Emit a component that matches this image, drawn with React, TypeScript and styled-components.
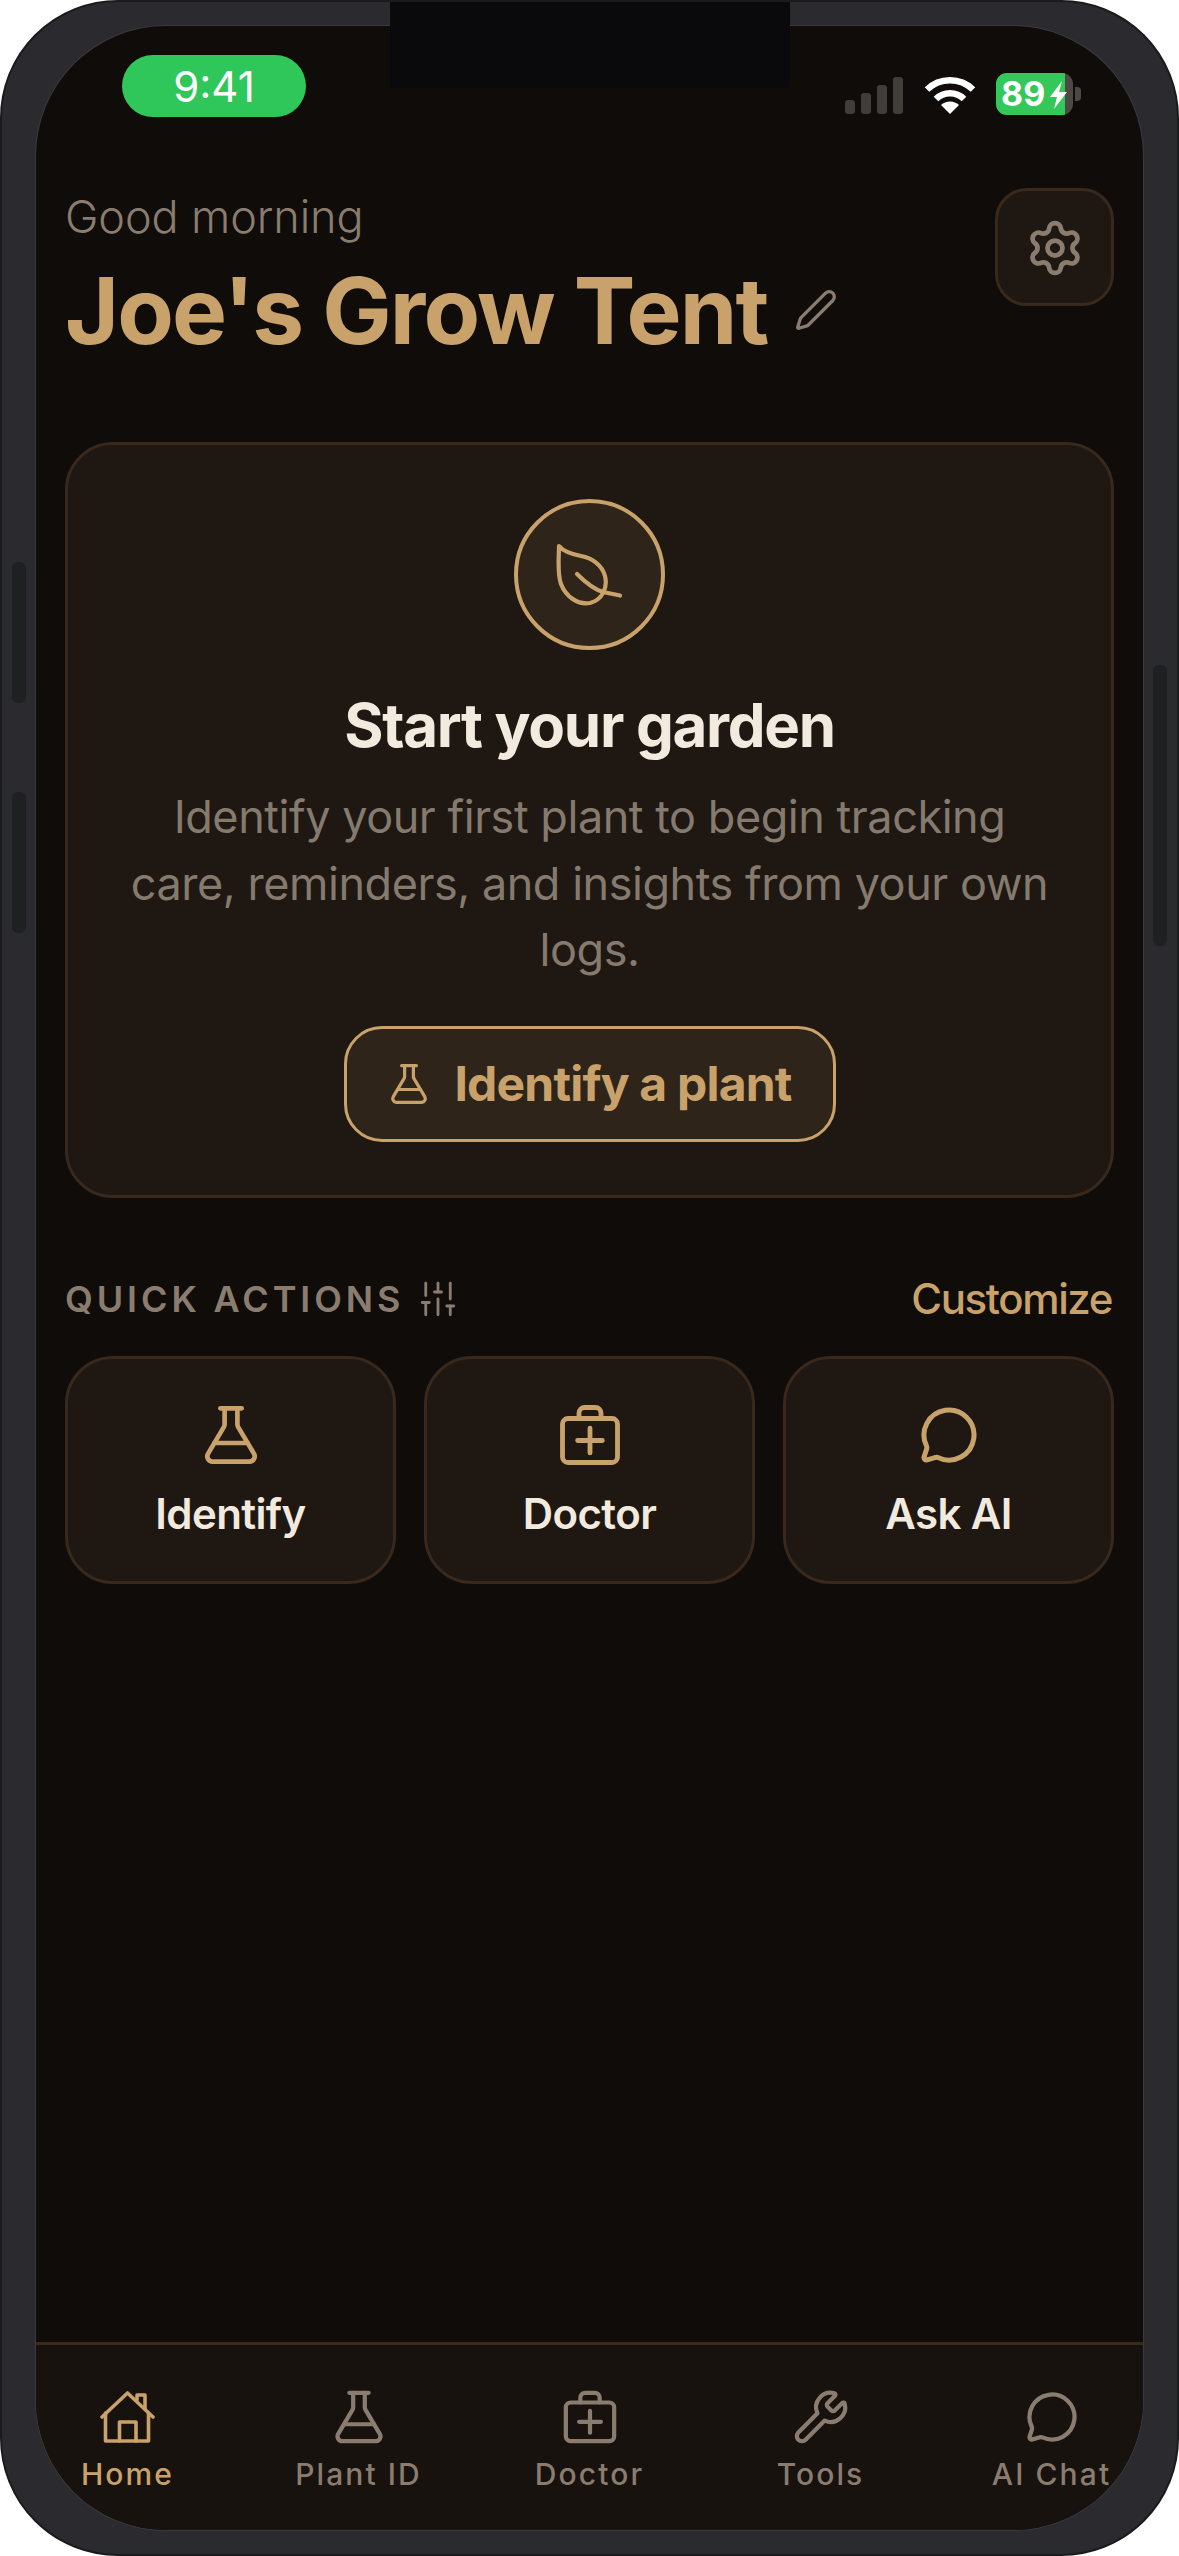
import React from "react";
import styled, { createGlobalStyle } from "styled-components";
import { MessageCircle, Pen, Settings, SlidersVertical, Wrench } from "lucide-react";

const Global = createGlobalStyle`
  html, body { margin: 0; padding: 0; background: #fff; }
  * { box-sizing: border-box; }
  body { font-family: Inter, "Liberation Sans", sans-serif; }
`;

const TAN = "#c9a26b";
const GREY = "#8a7d70";
const CREAM = "#f3eadf";
const LINE = "#38291c";
const PANEL = "#1e1712";

const Frame = styled.div`
  position: relative;
  width: 1179px;
  height: 2556px;
  border-radius: 118px;
  background: #2a2a2f;
  border: 2px solid #1a1b1d;
  padding: 24px 34px;
  display: flex;
  overflow: hidden;
`;
const Notch = styled.div`
  position: absolute;
  top: -2px;
  left: 388px;
  width: 400px;
  height: 88px;
  background: #0a0a0c;
  border-radius: 0 0 4px 4px;
  z-index: 3;
`;
const SideButton = styled.div<{ $side: "left" | "right"; $top: number; $h: number }>`
  position: absolute;
  ${(p) => (p.$side === "left" ? "left: 10px;" : "right: 10px;")}
  top: ${(p) => p.$top}px;
  width: 14px;
  height: ${(p) => p.$h}px;
  border-radius: 6px;
  background: #1f2022;
`;
const Screen = styled.div`
  flex: 1;
  min-width: 0;
  border-radius: 130px;
  background: #100c09;
  box-shadow: 0 0 0 1px #3a3a3e;
  overflow: hidden;
  display: flex;
  flex-direction: column;
`;
const StatusBar = styled.div`
  display: flex;
  justify-content: space-between;
  align-items: flex-start;
  padding: 29px 62px 0 86px;
`;
const TimePill = styled.div`
  width: 184px;
  height: 62px;
  border-radius: 31px;
  background: #30c75a;
  color: #fff;
  font-size: 42px;
  font-weight: 400;
  display: flex;
  align-items: center;
  justify-content: center;
`;
const StatusIcons = styled.div`
  display: flex;
  align-items: center;
  padding-top: 18px;
`;
const Signal = styled.div`
  display: flex;
  align-items: flex-end;
  gap: 6px;
  height: 40px;
  margin-right: 21px;
`;
const SignalBar = styled.div<{ $h: number }>`
  width: 10px;
  height: ${(p) => p.$h}px;
  border-radius: 3px;
  background: #413d39;
`;
const WifiIcon = styled.svg`
  display: block;
  width: 52px;
  height: 39px;
  margin-right: 20px;
`;
const Battery = styled.div`
  position: relative;
  width: 77px;
  height: 42px;
  border-radius: 11px;
  background: #4c4843;
  overflow: hidden;
`;
const BatteryFill = styled.div`
  width: 69px;
  height: 42px;
  background: #34c85a;
  color: #fff;
  font-size: 34px;
  font-weight: 700;
  line-height: 42px;
  padding-left: 5px;
`;
const BoltIcon = styled.svg`
  position: absolute;
  right: 5px;
  top: 8px;
  width: 19px;
  height: 28px;
`;
const BatteryCap = styled.div`
  width: 6px;
  height: 14px;
  margin-left: 2px;
  border-radius: 0 4px 4px 0;
  background: #4c4843;
`;
const Main = styled.main`
  flex: 1;
  padding: 0 29px;
`;
const Header = styled.header`
  display: flex;
  justify-content: space-between;
  align-items: flex-start;
  padding-top: 71px;
`;
const Greeting = styled.div`
  font-size: 45px;
  font-weight: 300;
  line-height: 54px;
  letter-spacing: -0.1px;
  color: ${GREY};
  margin-top: 2px;
`;
const TitleRow = styled.div`
  display: flex;
  align-items: center;
  gap: 26px;
  margin-top: 16px;
`;
const Title = styled.h1`
  margin: 0;
  font-size: 92.5px;
  font-weight: 700;
  line-height: 100px;
  letter-spacing: -1.85px;
  color: ${TAN};
`;
const GearButton = styled.button`
  width: 119px;
  height: 118px;
  border-radius: 32px;
  background: ${PANEL};
  border: 3px solid ${LINE};
  padding: 2px 0 0;
  color: ${GREY};
  display: flex;
  align-items: center;
  justify-content: center;
`;
const StartCard = styled.section`
  margin-top: 82px;
  border: 3px solid ${LINE};
  border-radius: 48px;
  background: ${PANEL};
  padding: 54px 50px 53px;
  display: flex;
  flex-direction: column;
  align-items: center;
  text-align: center;
`;
const LeafCircle = styled.div`
  width: 151px;
  height: 151px;
  border-radius: 50%;
  background: #2e241a;
  border: 4px solid ${TAN};
  display: flex;
  align-items: center;
  justify-content: center;
`;
const CardTitle = styled.h2`
  margin: 41px 0 0;
  font-size: 60px;
  font-weight: 700;
  line-height: 68px;
  letter-spacing: -1.3px;
  color: ${CREAM};
`;
const CardText = styled.p`
  margin: 25px 0 1px;
  font-size: 45px;
  font-weight: 400;
  line-height: 66.5px;
  letter-spacing: -0.46px;
  color: #857a6e;
`;
const PrimaryButton = styled.button`
  margin-top: 41px;
  width: 492px;
  height: 116px;
  border-radius: 38px;
  background: #2e241a;
  border: 3px solid ${TAN};
  color: ${TAN};
  font-family: inherit;
  font-size: 48px;
  font-weight: 700;
  letter-spacing: -0.8px;
  display: flex;
  align-items: center;
  justify-content: center;
  gap: 23px;
  padding: 0;
`;
const SectionRow = styled.div`
  display: flex;
  justify-content: space-between;
  align-items: center;
  margin-top: 78px;
  height: 46px;
`;
const SectionLabel = styled.div`
  display: flex;
  align-items: center;
  gap: 13px;
  font-size: 36px;
  font-weight: 600;
  letter-spacing: 3.9px;
  color: ${GREY};
`;
const CustomizeLink = styled.div`
  font-size: 42px;
  font-weight: 550;
  letter-spacing: -1.4px;
  padding-right: 2px;
  color: ${TAN};
`;
const ActionGrid = styled.div`
  display: grid;
  grid-template-columns: repeat(3, 1fr);
  gap: 28px;
  margin-top: 34px;
`;
const ActionCard = styled.div`
  height: 228px;
  border: 3px solid ${LINE};
  border-radius: 48px;
  background: ${PANEL};
  display: flex;
  flex-direction: column;
  align-items: center;
  padding-top: 44px;
  color: ${TAN};
`;
const ActionIcon = styled.div`
  height: 64px;
  display: flex;
  align-items: center;
  justify-content: center;
`;
const ActionLabel = styled.div`
  margin-top: 23px;
  font-size: 42px;
  font-weight: 600;
  line-height: 48px;
  letter-spacing: -0.6px;
  color: ${CREAM};
`;
const TabBar = styled.nav`
  height: 188px;
  flex: none;
  border-top: 3px solid #3a2a1b;
  background: #17120e;
  display: grid;
  grid-template-columns: repeat(5, 231px);
  justify-content: center;
`;
const Tab = styled.div<{ $active?: boolean }>`
  display: flex;
  flex-direction: column;
  align-items: center;
  padding-top: 43px;
  color: ${(p) => (p.$active ? TAN : GREY)};
`;
const TabIcon = styled.div`
  height: 58px;
  display: flex;
  align-items: center;
  justify-content: center;
`;
const TabLabel = styled.div`
  margin-top: 10px;
  font-size: 30px;
  font-weight: 500;
  letter-spacing: 2.1px;
  line-height: 36px;
  white-space: nowrap;
`;
const Glyph = styled.svg`
  display: block;
  fill: none;
  stroke: currentColor;
  stroke-linecap: round;
  stroke-linejoin: round;
`;

const Flask = ({ size, sw }: { size: number; sw: number }) => (
  <Glyph viewBox="0 0 24 24" width={size} height={size} strokeWidth={sw}>
    <path d="M14.4 2v6a2 2 0 0 0 .25.96l6 10.1A2 2 0 0 1 18.9 22H5.1a2 2 0 0 1-1.75-2.94l6-10.1A2 2 0 0 0 9.6 8V2" />
    <path d="M5.8 15h12.4" />
    <path d="M8 2h8" />
  </Glyph>
);
const MedicalCase = ({ size, sw }: { size: number; sw: number }) => (
  <Glyph viewBox="0 0 24 24" width={size} height={size} strokeWidth={sw}>
    <path d="M16 6V4a2 2 0 0 0-2-2h-4a2 2 0 0 0-2 2v2" />
    <rect x="2" y="6" width="20" height="16" rx="2" />
    <path d="M12 9.5v9M7.5 14h9" />
  </Glyph>
);
const HomeGlyph = () => (
  <Glyph viewBox="0 0 55 52" width={55} height={52} strokeWidth={3.6}>
    <path d="M2 26 27.5 2 53 26" />
    <path d="M5.5 22v28h43V22" />
    <path d="M19.5 50V31H36v19" />
    <path d="M37 9V4h8v14" />
  </Glyph>
);
const LeafGlyph = () => (
  <Glyph viewBox="0 0 68 64" width={68} height={64} strokeWidth={4.2} style={{ color: TAN }}>
    <path d="M3 3c4 5 12 8 22 10 11 2 21 9 24 20 3 12-3 24-15 27C22 62 10 54 5 41 1 30 3 14 3 3Z" />
    <path d="M21 31c8 8 16 15 26 18l17 3.5" />
  </Glyph>
);

const tabs = [
  { label: "Home", icon: <HomeGlyph />, active: true },
  { label: "Plant ID", icon: <Flask size={58} sw={1.75} /> },
  { label: "Doctor", icon: <MedicalCase size={58} sw={1.75} /> },
  { label: "Tools", icon: <Wrench size={58} strokeWidth={1.75} /> },
  { label: "AI Chat", icon: <MessageCircle size={54} strokeWidth={1.9} /> },
];

export default function App() {
  return (
    <>
      <Global />
      <Frame>
        <Notch />
        <SideButton $side="left" $top={560} $h={141} />
        <SideButton $side="left" $top={790} $h={141} />
        <SideButton $side="right" $top={663} $h={281} />
        <Screen>
          <StatusBar>
            <TimePill>9:41</TimePill>
            <StatusIcons>
              <Signal>
                {[14, 21, 29, 37].map((h) => (
                  <SignalBar key={h} $h={h} />
                ))}
              </Signal>
              <WifiIcon viewBox="0 0 52 39">
                <g fill="none" stroke="#fff" strokeWidth="6.5">
                  <path d="M3 14.5a33 33 0 0 1 46 0" />
                  <path d="M12 24a20 20 0 0 1 28 0" />
                </g>
                <path d="M26 39 17 30a13 13 0 0 1 18 0Z" fill="#fff" />
              </WifiIcon>
              <Battery>
                <BatteryFill>89</BatteryFill>
                <BoltIcon viewBox="0 0 19 28">
                  <path d="M13 0 1 16h7l-3 12L18 11h-8Z" fill="#fff" />
                </BoltIcon>
              </Battery>
              <BatteryCap />
            </StatusIcons>
          </StatusBar>
          <Main>
            <Header>
              <div>
                <Greeting>Good morning</Greeting>
                <TitleRow>
                  <Title>Joe's Grow Tent</Title>
                  <Pen size={44} strokeWidth={1.8} color={GREY} />
                </TitleRow>
              </div>
              <GearButton>
                <Settings size={60} strokeWidth={1.9} />
              </GearButton>
            </Header>
            <StartCard>
              <LeafCircle>
                <LeafGlyph />
              </LeafCircle>
              <CardTitle>Start your garden</CardTitle>
              <CardText>
                Identify your first plant to begin tracking care, reminders, and insights from your own logs.
              </CardText>
              <PrimaryButton>
                <Flask size={44} sw={1.75} />
                Identify a plant
              </PrimaryButton>
            </StartCard>
            <SectionRow>
              <SectionLabel>
                QUICK ACTIONS
                <SlidersVertical size={42} strokeWidth={1.6} />
              </SectionLabel>
              <CustomizeLink>Customize</CustomizeLink>
            </SectionRow>
            <ActionGrid>
              <ActionCard>
                <ActionIcon>
                  <Flask size={64} sw={1.75} />
                </ActionIcon>
                <ActionLabel>Identify</ActionLabel>
              </ActionCard>
              <ActionCard>
                <ActionIcon>
                  <MedicalCase size={66} sw={1.75} />
                </ActionIcon>
                <ActionLabel>Doctor</ActionLabel>
              </ActionCard>
              <ActionCard>
                <ActionIcon>
                  <MessageCircle size={60} strokeWidth={2} />
                </ActionIcon>
                <ActionLabel>Ask AI</ActionLabel>
              </ActionCard>
            </ActionGrid>
          </Main>
          <TabBar>
            {tabs.map((t) => (
              <Tab key={t.label} $active={t.active}>
                <TabIcon>{t.icon}</TabIcon>
                <TabLabel>{t.label}</TabLabel>
              </Tab>
            ))}
          </TabBar>
        </Screen>
      </Frame>
    </>
  );
}
